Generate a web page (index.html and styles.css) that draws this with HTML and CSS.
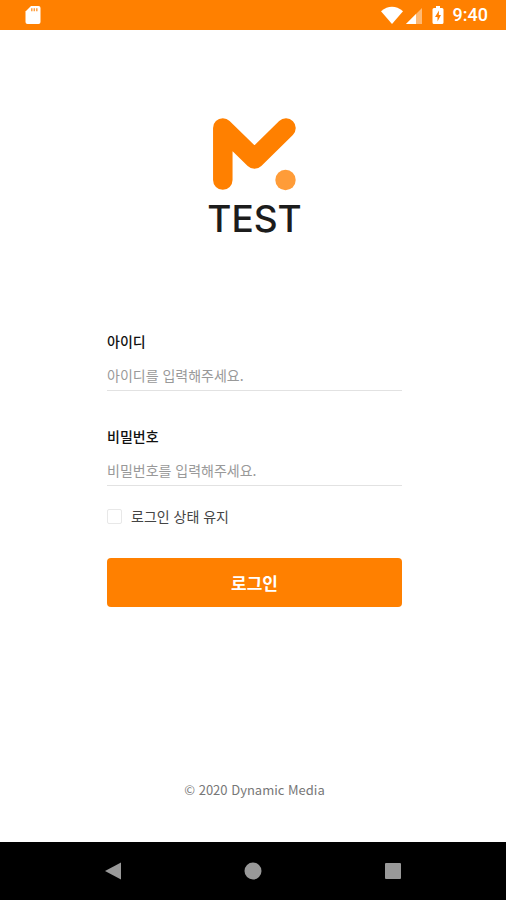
FILE: index.html
```html
<!DOCTYPE html>
<html lang="ko">
<head>
<meta charset="utf-8">
<meta name="viewport" content="width=device-width, initial-scale=1">
<title>TEST</title>
<link rel="stylesheet" href="styles.css">
</head>
<body>
<header class="status">
  <svg class="sd" width="16" height="20" viewBox="0 0 16 20" aria-hidden="true">
    <path fill="#fff" d="M6 1h7.500a2 2 0 0 1 2 2v14a2 2 0 0 1-2 2H2.500a2 2 0 0 1-2-2V6.500z"/>
    <path stroke="#ff8000" stroke-width="1.500" opacity=".75" d="M6.800 3.200v3M9.300 3.200v3M11.800 3.200v3"/>
  </svg>
  <div class="status-right">
    <svg width="43" height="20" viewBox="0 0 43 20" aria-hidden="true">
      <path fill="#fff" d="M0 6.200Q11 -2.500 22 6.200L11 19z"/>
      <path fill="#fff" opacity=".45" d="M41 3v16H25z"/>
      <path fill="#fff" d="M35 9v10H25z"/>
    </svg>
    <svg class="battery" width="12" height="20" viewBox="0 0 12 20" aria-hidden="true">
      <path fill="#fff" d="M4 1h4v2h2a1.500 1.500 0 0 1 1.500 1.500v13A1.500 1.500 0 0 1 10 19H2a1.500 1.500 0 0 1-1.500-1.500v-13A1.500 1.500 0 0 1 2 3h2z"/>
      <path fill="#ff8000" d="M7 5.500L3 12h2.500v4.500L9 10H6.800z"/>
    </svg>
    <span class="time">9:40</span>
  </div>
</header>
<main class="login">
  <h1 class="brand">
    <svg width="84" height="74" viewBox="0 0 84 74" aria-hidden="true">
      <path fill="none" stroke="#ff8000" stroke-width="19.500" stroke-linecap="round" stroke-linejoin="round" d="M9.800 63V11L41.500 42 73 11"/>
      <circle cx="72.500" cy="63" r="10.200" fill="#ff9c38"/>
    </svg>
    <span class="wordmark">TEST</span>
  </h1>
  <form class="form">
    <div class="field">
      <label for="user">아이디</label>
      <input id="user" type="text" placeholder="아이디를 입력해주세요.">
    </div>
    <div class="field">
      <label for="password">비밀번호</label>
      <input id="password" type="password" placeholder="비밀번호를 입력해주세요.">
    </div>
    <label class="keep"><input type="checkbox">로그인 상태 유지</label>
    <button class="submit" type="submit">로그인</button>
  </form>
  <footer class="copyright">© 2020 Dynamic Media</footer>
</main>
<nav class="navbar">
  <button type="button" aria-label="Back"><svg width="18" height="18" viewBox="0 0 18 18"><path fill="#999" d="M1 9L17 .5v17z"/></svg></button>
  <button type="button" aria-label="Home"><svg width="18" height="18" viewBox="0 0 18 18"><circle cx="9" cy="9" r="8.500" fill="#999"/></svg></button>
  <button type="button" aria-label="Recents"><svg width="18" height="18" viewBox="0 0 18 18"><rect x="1" y="1" width="16" height="16" rx="1" fill="#999"/></svg></button>
</nav>
</body>
</html>
```
FILE: styles.css
```css
* { box-sizing: border-box; }

body {
  margin: 0;
  min-height: 100vh;
  display: flex;
  flex-direction: column;
  background: #fff;
  color: #111;
  font: 14px/20px "Noto Sans CJK KR", sans-serif;
}

svg { display: block; }

button, input { font: inherit; }

.status {
  display: flex;
  justify-content: space-between;
  align-items: center;
  height: 30px;
  padding: 0 18px 0 25px;
  background: #ff8000;
  color: #fff;
}

.status-right {
  display: flex;
  align-items: center;
}

.battery { margin: 0 9px 0 8px; }

.time {
  font: 500 18px/20px Roboto, sans-serif;
}

.login {
  flex: 1;
  display: flex;
  flex-direction: column;
  padding: 87px 104px 42px 107px;
}

.brand {
  display: flex;
  flex-direction: column;
  align-items: center;
  margin: 0;
}

.wordmark {
  margin-top: 8px;
  color: #1c1c1c;
  font: 500 37px/40px Inter, sans-serif;
}

.form {
  display: flex;
  flex-direction: column;
  margin-top: 92px;
}

.field {
  display: flex;
  flex-direction: column;
  margin-bottom: 35px;
}

.field label { font-weight: 500; }

.field input {
  width: 100%;
  height: 28px;
  margin-top: 12px;
  padding: 0 0 4px;
  border: 0;
  border-bottom: 1px solid #e2e2e2;
  background: transparent;
  outline: 0;
}

.field input::placeholder { color: #999; }

.keep {
  display: flex;
  align-items: center;
  gap: 9px;
  margin-top: -15px;
  color: #444;
}

.keep input {
  appearance: none;
  width: 15px;
  height: 15px;
  margin: 0;
  border: 1px solid #e8e8e8;
  border-radius: 2px;
  background: #fff;
}

.keep input:checked { background: #ff8000; }

.submit {
  height: 49px;
  margin-top: 32px;
  padding: 0;
  border: 0;
  border-radius: 4px;
  background: #ff8000;
  color: #fff;
  font-size: 17px;
  font-weight: 700;
}

.copyright {
  margin-top: auto;
  color: #777;
  text-align: center;
  font-size: 13px;
}

.navbar {
  display: flex;
  justify-content: center;
  align-items: center;
  gap: 122px;
  height: 58px;
  background: #000;
}

.navbar button {
  padding: 0;
  border: 0;
  background: none;
}
```
